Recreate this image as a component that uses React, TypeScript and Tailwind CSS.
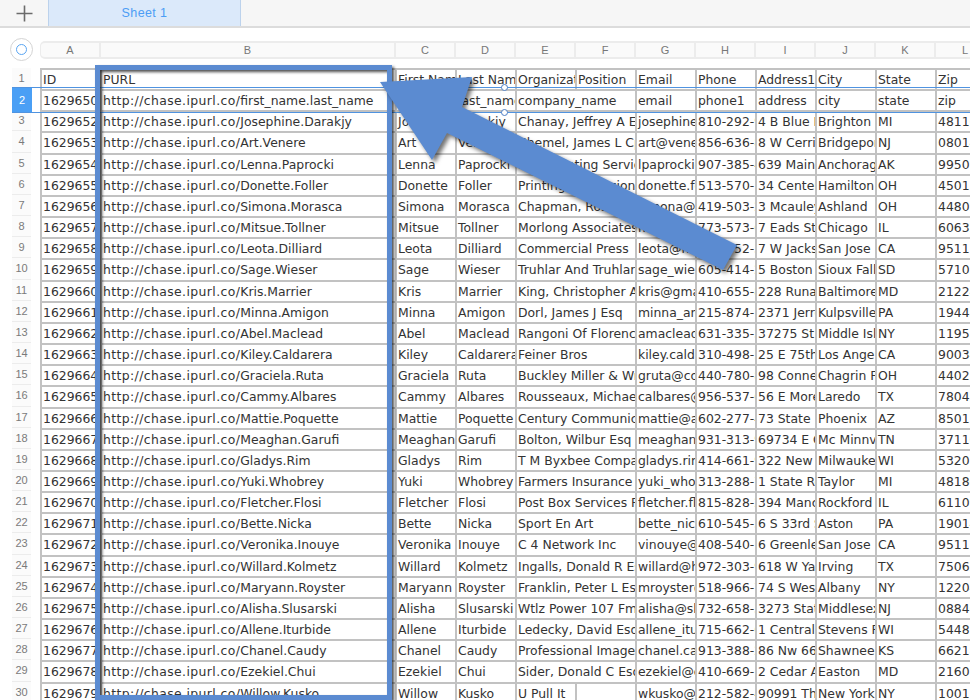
import React from "react"

const columns = ["A", "B", "C", "D", "E", "F", "G", "H", "I", "J", "K", "L"]

// first, last, company, email, phone, address, city, state, zip
const people: string[][] = [
  ["Josephine", "Darakjy", "Chanay, Jeffrey A Esq", "josephine_darakjy@darakjy.org", "810-292-9388", "4 B Blue Ridge Blvd", "Brighton", "MI", "48116"],
  ["Art", "Venere", "Chemel, James L Cpa", "art@venere.org", "856-636-8749", "8 W Cerritos Ave #54", "Bridgeport", "NJ", "08014"],
  ["Lenna", "Paprocki", "Feltz Printing Service", "lpaprocki@hotmail.com", "907-385-4412", "639 Main St", "Anchorage", "AK", "99501"],
  ["Donette", "Foller", "Printing Dimensions", "donette.foller@cox.net", "513-570-1893", "34 Center St", "Hamilton", "OH", "45011"],
  ["Simona", "Morasca", "Chapman, Ross E Esq", "simona@morasca.com", "419-503-2484", "3 Mcauley Dr", "Ashland", "OH", "44805"],
  ["Mitsue", "Tollner", "Morlong Associates", "mitsue_tollner@yahoo.com", "773-573-6914", "7 Eads St", "Chicago", "IL", "60632"],
  ["Leota", "Dilliard", "Commercial Press", "leota@hotmail.com", "408-752-3500", "7 W Jackson Blvd", "San Jose", "CA", "95111"],
  ["Sage", "Wieser", "Truhlar And Truhlar Attys", "sage_wieser@cox.net", "605-414-2147", "5 Boston Ave #88", "Sioux Falls", "SD", "57105"],
  ["Kris", "Marrier", "King, Christopher A Esq", "kris@gmail.com", "410-655-8723", "228 Runamuck Pl #2808", "Baltimore", "MD", "21224"],
  ["Minna", "Amigon", "Dorl, James J Esq", "minna_amigon@yahoo.com", "215-874-1229", "2371 Jerrold Ave", "Kulpsville", "PA", "19443"],
  ["Abel", "Maclead", "Rangoni Of Florence", "amaclead@gmail.com", "631-335-3414", "37275 St Rt 17m M", "Middle Island", "NY", "11953"],
  ["Kiley", "Caldarera", "Feiner Bros", "kiley.caldarera@aol.com", "310-498-5651", "25 E 75th St #69", "Los Angeles", "CA", "90034"],
  ["Graciela", "Ruta", "Buckley Miller & Wright", "gruta@cox.net", "440-780-8425", "98 Connecticut Ave Nw", "Chagrin Falls", "OH", "44023"],
  ["Cammy", "Albares", "Rousseaux, Michael Esq", "calbares@gmail.com", "956-537-6195", "56 E Morehead St", "Laredo", "TX", "78045"],
  ["Mattie", "Poquette", "Century Communications", "mattie@aol.com", "602-277-4385", "73 State Road 434 E", "Phoenix", "AZ", "85013"],
  ["Meaghan", "Garufi", "Bolton, Wilbur Esq", "meaghan@hotmail.com", "931-313-9635", "69734 E Carrillo St", "Mc Minnville", "TN", "37110"],
  ["Gladys", "Rim", "T M Byxbee Company Pc", "gladys.rim@rim.org", "414-661-9598", "322 New Horizon Blvd", "Milwaukee", "WI", "53207"],
  ["Yuki", "Whobrey", "Farmers Insurance Group", "yuki_whobrey@aol.com", "313-288-7937", "1 State Route 27", "Taylor", "MI", "48180"],
  ["Fletcher", "Flosi", "Post Box Services Plus", "fletcher.flosi@yahoo.com", "815-828-2147", "394 Manchester Blvd", "Rockford", "IL", "61109"],
  ["Bette", "Nicka", "Sport En Art", "bette_nicka@cox.net", "610-545-3615", "6 S 33rd St", "Aston", "PA", "19014"],
  ["Veronika", "Inouye", "C 4 Network Inc", "vinouye@aol.com", "408-540-1785", "6 Greenleaf Ave", "San Jose", "CA", "95111"],
  ["Willard", "Kolmetz", "Ingalls, Donald R Esq", "willard@hotmail.com", "972-303-9197", "618 W Yakima Ave", "Irving", "TX", "75062"],
  ["Maryann", "Royster", "Franklin, Peter L Esq", "mroyster@royster.com", "518-966-7987", "74 S Westgate St", "Albany", "NY", "12204"],
  ["Alisha", "Slusarski", "Wtlz Power 107 Fm", "alisha@slusarski.com", "732-658-3154", "3273 State St", "Middlesex", "NJ", "08846"],
  ["Allene", "Iturbide", "Ledecky, David Esq", "allene_iturbide@cox.net", "715-662-6764", "1 Central Ave", "Stevens Point", "WI", "54481"],
  ["Chanel", "Caudy", "Professional Image Inc", "chanel.caudy@caudy.org", "913-388-2079", "86 Nw 66th St #8673", "Shawnee", "KS", "66218"],
  ["Ezekiel", "Chui", "Sider, Donald C Esq", "ezekiel@chui.com", "410-669-1642", "2 Cedar Ave #84", "Easton", "MD", "21601"],
  ["Willow", "Kusko", "U Pull It", "wkusko@yahoo.com", "212-582-4976", "90991 Thorburn Ave", "New York", "NY", "10011"],
]

function Cell({ children, wide }: { children?: React.ReactNode; wide?: boolean }) {
  return (
    <div
      className={`${wide ? "col-span-2" : ""} min-w-0 overflow-hidden whitespace-nowrap border-r-2 border-b-2 border-[#c2c2c2] pl-[1px] text-[12.4px] leading-[20.6px] text-[#333]`}
    >
      {children}
    </div>
  )
}

function DataRow({ id, slug, person, splitCompany }: { id: string; slug: string; person: string[]; splitCompany?: boolean }) {
  const [first, last, company, email, phone, address, city, state, zip] = person
  return (
    <>
      <Cell>{id}</Cell>
      <Cell>
        <span className="tracking-[0.4px]">http://chase.ipurl.co/</span>
        {slug}
      </Cell>
      <Cell>{first}</Cell>
      <Cell>{last}</Cell>
      {splitCompany ? (
        <>
          <Cell>{company}</Cell>
          <Cell />
        </>
      ) : (
        <Cell wide>{company}</Cell>
      )}
      <Cell>{email}</Cell>
      <Cell>{phone}</Cell>
      <Cell>{address}</Cell>
      <Cell>{city}</Cell>
      <Cell>{state}</Cell>
      <Cell>{zip}</Cell>
    </>
  )
}

export default function App() {
  const rowLabels = Array.from({ length: 30 }, (_, i) => i + 1)

  return (
    <div className="relative h-[700px] w-[970px] overflow-hidden bg-white font-['DejaVu_Sans',sans-serif]">
      {/* sheet tabs */}
      <div className="flex h-[28px] border-b-2 border-[#dcdcdc] bg-[#f6f6f6]">
        <div className="flex w-[48px] items-center justify-center">
          <svg width="17" height="17" viewBox="0 0 17 17" fill="none" stroke="#6b6b6b" strokeWidth="1.6">
            <path d="M8.5 0.5v16M0.5 8.5h16" />
          </svg>
        </div>
        <div className="flex w-[193px] items-center justify-center border-x border-[#bcd2ec] bg-[#dbe9fa] font-['Liberation_Sans',sans-serif] text-[12.5px] tracking-[0.4px] text-[#4c9df5]">
          Sheet 1
        </div>
      </div>

      {/* column letters */}
      <div className="flex h-[30px] items-start pt-[13px]">
        <div className="flex w-[40px] shrink-0 justify-start pl-[10px]">
          <div className="-mt-[3px] flex h-[23px] w-[23px] items-center justify-center rounded-full border border-[#d4d4d4]">
            <div className="h-[11px] w-[11px] rounded-full border-[1.5px] border-[#5aa5f2]" />
          </div>
        </div>
        <div className="grid h-[18px] w-[955px] shrink-0 grid-cols-[60px_295px_60px_60px_60px_60px_60px_60px_60px_60px_60px_60px] rounded-l-[5px] border-y-2 border-l border-[#ececec] bg-[#fafafa] font-['Liberation_Sans',sans-serif] text-[11px] leading-[15px] text-[#777]">
          {columns.map((c) => (
            <div key={c} className="border-r-2 border-[#ececec] text-center">
              {c}
            </div>
          ))}
        </div>
      </div>

      {/* rows */}
      <div className="mt-[10px] flex">
        <div className="grid w-[40px] shrink-0 auto-rows-[21.17px] pl-[12px] pr-[9px] font-['Liberation_Sans',sans-serif] text-[11px] leading-[20px] text-[#7a7a7a]">
          {rowLabels.map((n) => (
            <div key={n} className="border-b border-[#ececec] bg-[#fbfbfb] text-center">
              {n}
            </div>
          ))}
        </div>
        <div className="grid w-[957px] shrink-0 auto-rows-[21.17px] grid-cols-[60px_295px_60px_60px_60px_60px_60px_60px_60px_60px_60px_60px] border-t-2 border-l-2 border-[#c2c2c2]">
          <Cell>ID</Cell>
          <Cell>PURL</Cell>
          <Cell>First Name</Cell>
          <Cell>Last Name</Cell>
          <Cell>Organization</Cell>
          <Cell>Position</Cell>
          <Cell>Email</Cell>
          <Cell>Phone</Cell>
          <Cell>Address1</Cell>
          <Cell>City</Cell>
          <Cell>State</Cell>
          <Cell>Zip</Cell>
          <DataRow
            id="1629650"
            slug="first_name.last_name"
            person={["first_name", "last_name", "company_name", "email", "phone1", "address", "city", "state", "zip"]}
          />
          {people.map((p, i) => (
            <DataRow
              key={p[0]}
              id={String(1629652 + i)}
              slug={`${p[0]}.${p[1]}`}
              person={p}
              splitCompany={i === people.length - 1}
            />
          ))}
        </div>
      </div>

      {/* selected row */}
      <div className="absolute left-[12px] top-[87px] h-[26px] w-[958px] border-y border-[#4f93e0]">
        <div className="h-full w-[20px] bg-[#4a9ff5] text-center font-['Liberation_Sans',sans-serif] text-[11px] leading-[24px] text-white">2</div>
        <div className="absolute left-[489px] -top-[4px] h-[7px] w-[7px] rounded-full border border-[#4e7fc4] bg-white" />
        <div className="absolute left-[489px] -bottom-[4px] h-[7px] w-[7px] rounded-full border border-[#4e7fc4] bg-white" />
      </div>

      {/* annotation: box and arrow */}
      <div className="absolute left-[95px] top-[65px] h-[635px] w-[297px] border-[5px] border-[#5b8bd1] [filter:drop-shadow(2px_2px_1.5px_rgba(0,0,0,0.7))]" />
      <svg className="absolute left-0 top-0 [filter:drop-shadow(3px_3px_2px_rgba(0,0,0,0.55))]" width="970" height="700" viewBox="0 0 970 700">
        <polygon points="380,82 472,77 462,107 737,245 723,270 447,133 432,160" fill="#5b8bd1" />
      </svg>
    </div>
  )
}
